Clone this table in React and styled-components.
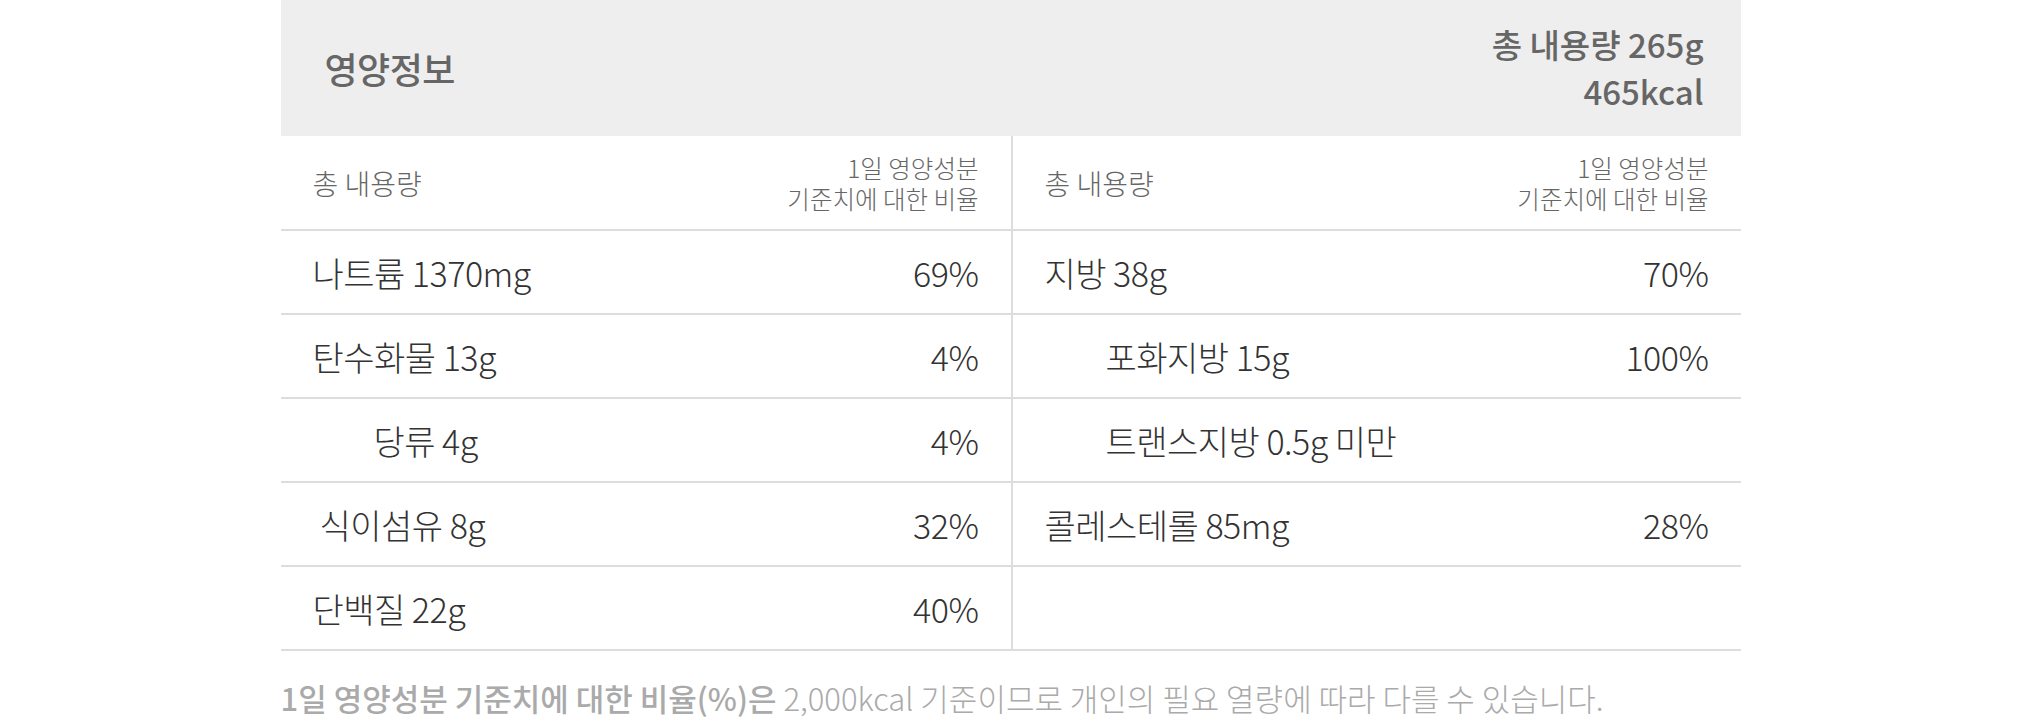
import styled, { createGlobalStyle } from 'styled-components';

const GlobalStyle = createGlobalStyle`
  body {
    margin: 0;
    background: #fff;
    font-family: "Noto Sans CJK KR", "Noto Sans", sans-serif;
  }
`;

const leftRows = [
  { name: '나트륨 1370mg', pct: '69%' },
  { name: '탄수화물 13g', pct: '4%' },
  { name: '당류 4g', pct: '4%', indent: 'sub' },
  { name: '식이섬유 8g', pct: '32%', indent: 'slight' },
  { name: '단백질 22g', pct: '40%' },
];

const rightRows = [
  { name: '지방 38g', pct: '70%' },
  { name: '포화지방 15g', pct: '100%', indent: 'sub' },
  { name: '트랜스지방 0.5g 미만', pct: '', indent: 'sub' },
  { name: '콜레스테롤 85mg', pct: '28%' },
  { name: '', pct: '' },
];

export default function App() {
  const renderColumn = (rows, side) => (
    <Column $side={side}>
      <SubHead>
        <SubLabel>총 내용량</SubLabel>
        <SubNote>
          1일 영양성분
          <br />
          기준치에 대한 비율
        </SubNote>
      </SubHead>
      {rows.map((row, i) => (
        <Row key={i}>
          <Name $indent={row.indent}>{row.name}</Name>
          <Pct>{row.pct}</Pct>
        </Row>
      ))}
    </Column>
  );

  return (
    <>
      <GlobalStyle />
      <Wrapper>
        <Header>
          <Title>영양정보</Title>
          <Totals>
            총 내용량 265g
            <br />
            465kcal
          </Totals>
        </Header>
        <Grid>
          {renderColumn(leftRows, 'left')}
          {renderColumn(rightRows, 'right')}
        </Grid>
        <Footnote>
          <strong>1일 영양성분 기준치에 대한 비율(%)은</strong> 2,000kcal 기준이므로 개인의 필요 열량에 따라 다를 수 있습니다.
        </Footnote>
      </Wrapper>
    </>
  );
}

const Wrapper = styled.div`
  width: 1460px;
  margin: 0 auto;
`;

const Header = styled.div`
  display: flex;
  align-items: center;
  justify-content: space-between;
  height: 136px;
  padding: 0 37px 0 44px;
  box-sizing: border-box;
  background: #eeeeee;
  color: #666;
`;

const Title = styled.h2`
  margin: 0;
  font-size: 36px;
  font-weight: 500;
  letter-spacing: -0.5px;
`;

const Totals = styled.div`
  text-align: right;
  font-size: 33px;
  font-weight: 500;
  line-height: 47px;
`;

const Grid = styled.div`
  display: grid;
  grid-template-columns: 1fr 1fr;
`;

const Column = styled.div`
  display: flex;
  flex-direction: column;
  border-left: ${(p) => (p.$side === 'right' ? '2px solid #dddddd' : 'none')};
`;

const SubHead = styled.div`
  display: flex;
  align-items: center;
  justify-content: space-between;
  height: 95px;
  padding: 0 32px;
  box-sizing: border-box;
  border-bottom: 2px solid #dddddd;
  color: #666;
`;

const SubLabel = styled.span`
  font-size: 28px;
  font-weight: 300;
`;

const SubNote = styled.span`
  text-align: right;
  font-size: 24.5px;
  font-weight: 300;
  line-height: 31px;
`;

const Row = styled.div`
  display: flex;
  align-items: center;
  justify-content: space-between;
  height: 84px;
  padding: 0 32px;
  box-sizing: border-box;
  border-bottom: 2px solid #dddddd;
  color: #333;
  font-size: 34px;
  font-weight: 300;
  letter-spacing: -0.5px;
`;

const Name = styled.span`
  padding-left: ${(p) => (p.$indent === 'sub' ? '61px' : p.$indent === 'slight' ? '7px' : '0')};
`;

const Pct = styled.span``;

const Footnote = styled.p`
  margin: 24px 0 0;
  font-size: 31px;
  font-weight: 300;
  color: #aaaaaa;

  strong {
    font-weight: 500;
  }
`;
